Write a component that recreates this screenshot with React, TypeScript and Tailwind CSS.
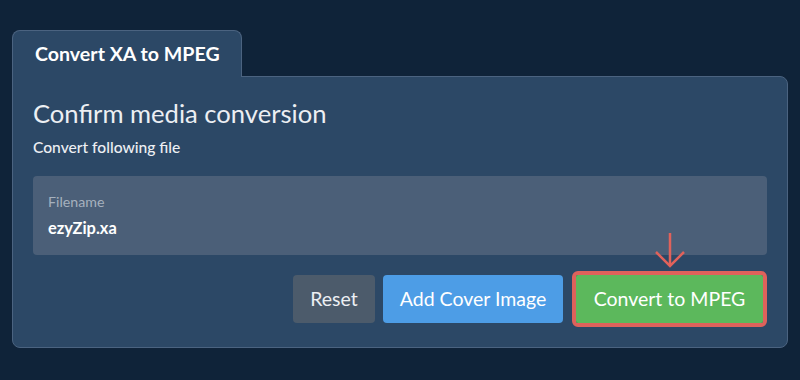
import React from "react";

export default function App() {
  return (
    <div
      className="min-h-[380px] w-full bg-[#0f2339] px-3 pt-[30px]"
      style={{ fontFamily: "Lato, 'Open Sans', sans-serif" }}
    >
      {/* Tab */}
      <div className="relative z-10 -mb-px flex h-[47px] w-[230px] items-center rounded-t-lg border border-b-0 border-[#4b6380] bg-[#2c4866] pl-[22px]">
        <span className="text-[19.6px] font-bold text-white">Convert XA to MPEG</span>
      </div>

      {/* Panel */}
      <div className="rounded-b-lg rounded-tr-lg border border-[#4b6380] bg-[#2c4866] px-5 pb-5 pt-[19px]">
        <h1 className="text-[25.6px] leading-[34px] text-[#eceff3]">Confirm media conversion</h1>
        <p className="mt-[6px] text-[15.6px] font-medium leading-[22px] text-[#eceff3]">Convert following file</p>

        <div className="mt-[18px] flex h-[79px] flex-col justify-center rounded bg-[#4b5f78] px-[15px]">
          <span className="text-[14.2px] text-[#a6b1be]">Filename</span>
          <span className="mt-[4px] text-[16.4px] font-bold text-white">ezyZip.xa</span>
        </div>

        <div className="mt-[16px] flex items-center justify-end gap-2">
          <button className="h-12 w-[82px] rounded-[4px] bg-[#4c5b6b] text-[19.5px] text-[#eceff3]">
            Reset
          </button>
          <button className="h-12 w-[180px] rounded-[4px] bg-[#4d9de6] text-[19.5px] text-white">
            Add Cover Image
          </button>
          <div className="relative ml-px">
            <svg
              className="absolute left-1/2 top-[-38px] -translate-x-1/2"
              width="32"
              height="36"
              viewBox="0 0 32 36"
              fill="none"
              stroke="#e0625b"
              strokeWidth="2.5"
            >
              <path d="M16 0 V33" />
              <path d="M2 19 L16 33 L30 19" />
            </svg>
            <div className="rounded-md border-4 border-[#de625b]">
              <button className="block h-12 w-[187px] rounded-[2px] bg-[#5cb85c] text-[19.5px] text-white">
                Convert to MPEG
              </button>
            </div>
          </div>
        </div>
      </div>
    </div>
  );
}
